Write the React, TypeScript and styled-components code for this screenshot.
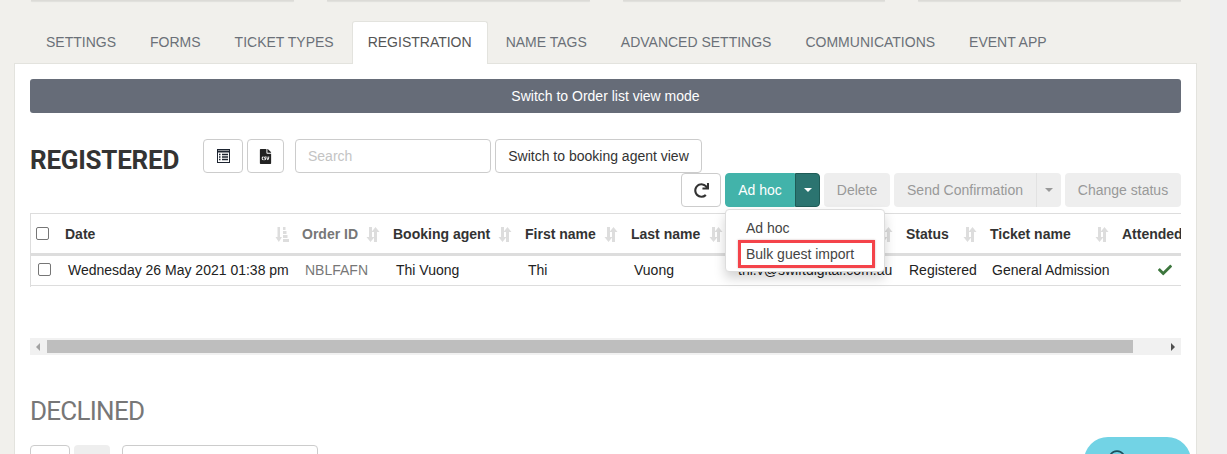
import React from "react";
import styled, { createGlobalStyle } from "styled-components";
import { FaFileCsv, FaRedo, FaCheck, FaRegQuestionCircle } from "react-icons/fa";

const Global = createGlobalStyle`
  html, body { margin: 0; padding: 0; height: 454px; overflow: hidden; background: #f1f0ec; }
  body { font-family: "Liberation Sans", Arial, sans-serif; font-size: 14px; color: #333; }
  * { box-sizing: border-box; }
`;

const Page = styled.div`
  display: flex;
  width: 1227px;
  height: 454px;
  overflow: hidden;
`;
const Main = styled.main`
  width: 1210px;
  padding: 0 13px 0 14px;
`;
const Gutter = styled.div`
  width: 17px;
  background: #efefef;
`;
const Stats = styled.div`
  display: flex;
  gap: 33px;
  padding: 0 16px 0 17px;
  height: 1px;
  margin-bottom: 20px;
`;
const Stat = styled.div`
  flex: 1;
  background: #dcdbd7;
  box-shadow: 0 1px 1px rgba(0, 0, 0, 0.08);
`;
const Tabs = styled.nav`
  display: flex;
  gap: 2px;
  padding-left: 16px;
  height: 43px;
  margin-bottom: -1px;
  position: relative;
  z-index: 1;
`;
const Tab = styled.a<{ $active?: boolean }>`
  display: flex;
  align-items: center;
  padding: 0 15px 2px;
  height: 43px;
  color: ${(p) => (p.$active ? "#555" : "#6b7078")};
  background: ${(p) => (p.$active ? "#fff" : "transparent")};
  border: 1px solid ${(p) => (p.$active ? "#e3e3de" : "transparent")};
  border-bottom: none;
  border-radius: 3px 3px 0 0;
  font-size: 14px;
  text-transform: uppercase;
  white-space: nowrap;
`;
const Card = styled.section`
  position: relative;
  height: 391px;
  background: #fff;
  border: 1px solid #e3e3de;
  border-bottom: none;
  padding: 15px 15px 0;
  overflow: hidden;
`;
const Banner = styled.div`
  height: 34px;
  display: flex;
  align-items: center;
  justify-content: center;
  background: #666c78;
  color: #fff;
  border-radius: 3px;
  font-size: 14px;
`;
const TitleRow = styled.div`
  display: flex;
  align-items: flex-start;
  margin-top: 26px;
  height: 34px;
`;
const Title = styled.h2<{ $muted?: boolean }>`
  margin: 0;
  font-family: Roboto, sans-serif;
  font-size: 26px;
  line-height: 42px;
  letter-spacing: ${(p) => (p.$muted ? "-0.75px" : "-0.25px")};
  font-weight: ${(p) => (p.$muted ? 400 : 700)};
  color: ${(p) => (p.$muted ? "#777" : "#333")};
  width: 173px;
`;
const Button = styled.button<{ $w?: number; $ml?: number }>`
  display: inline-flex;
  align-items: center;
  justify-content: center;
  height: 34px;
  width: ${(p) => (p.$w ? `${p.$w}px` : "auto")};
  margin-left: ${(p) => p.$ml ?? 0}px;
  padding: 0;
  background: #fff;
  border: 1px solid #ccc;
  border-radius: 4px;
  color: #333;
  font: 14px "Liberation Sans", Arial, sans-serif;
  white-space: nowrap;
`;
const Search = styled.input<{ $ml?: number }>`
  width: 196px;
  height: 34px;
  margin-left: ${(p) => p.$ml ?? 11}px;
  padding: 0 12px;
  border: 1px solid #ccc;
  border-radius: 4px;
  font: 14px "Liberation Sans", Arial, sans-serif;
  &::placeholder { color: #c4c4c4; }
`;
const ActionRow = styled.div`
  position: relative;
  display: flex;
  justify-content: flex-end;
  gap: 4px;
  height: 34px;
`;
const Split = styled.div`
  display: flex;
`;
const Primary = styled.button`
  width: 70px;
  height: 34px;
  padding: 0;
  border: 1px solid #42b3aa;
  border-radius: 4px 0 0 4px;
  background: #42b3aa;
  color: #fff;
  font: 14px "Liberation Sans", Arial, sans-serif;
`;
const PrimaryCaret = styled.button`
  display: flex;
  align-items: center;
  justify-content: center;
  width: 25px;
  height: 34px;
  padding: 0;
  border: 1px solid #1f5c57;
  border-radius: 0 4px 4px 0;
  background: #2b7470;
`;
const Caret = styled.span<{ $color: string }>`
  width: 0;
  height: 0;
  border-left: 4px solid transparent;
  border-right: 4px solid transparent;
  border-top: 4px solid ${(p) => p.$color};
`;
const Disabled = styled.button<{ $w: number; $join?: "left" | "right" }>`
  display: flex;
  align-items: center;
  justify-content: center;
  width: ${(p) => p.$w}px;
  height: 34px;
  padding: 0;
  border: none;
  border-left: ${(p) => (p.$join === "right" ? "1px solid #e2e2e2" : "none")};
  border-radius: ${(p) =>
    p.$join === "left" ? "4px 0 0 4px" : p.$join === "right" ? "0 4px 4px 0" : "4px"};
  background: #eee;
  color: #999;
  font: 14px "Liberation Sans", Arial, sans-serif;
`;
const Menu = styled.div`
  position: absolute;
  z-index: 5;
  left: 695px;
  top: 36px;
  width: 160px;
  height: 63px;
  padding: 5px 0;
  background: #fff;
  border: 1px solid #ddd;
  border-radius: 4px;
  box-shadow: 0 6px 12px rgba(0, 0, 0, 0.175);
`;
const MenuItem = styled.div`
  padding-left: 20px;
  height: 26px;
  line-height: 26px;
  font-size: 14px;
  color: #444;
`;
const Highlight = styled.div`
  position: absolute;
  left: 12px;
  top: 30px;
  width: 137px;
  height: 28px;
  border: 3px solid #f4434a;
  box-shadow: 0 0 2px rgba(120, 60, 60, 0.35);
  pointer-events: none;
`;
const TableWrap = styled.div`
  margin-top: 6px;
  height: 74px;
  overflow: hidden;
  border-left: 1px solid #ddd;
`;
const Table = styled.table`
  table-layout: fixed;
  width: 1200px;
  border-collapse: collapse;
  font-size: 14px;
`;
const HeadRow = styled.tr`
  height: 41px;
  border-top: 1px solid #ddd;
  border-bottom: 3px solid #ddd;
`;
const Th = styled.th<{ $muted?: boolean }>`
  position: relative;
  padding: 1px 0 0 8px;
  text-align: left;
  font-weight: 700;
  color: ${(p) => (p.$muted ? "#777" : "#333")};
  white-space: nowrap;
  overflow: hidden;
`;
const BodyRow = styled.tr`
  height: 31px;
  border-bottom: 1px solid #ddd;
`;
const Td = styled.td<{ $muted?: boolean; $pad?: number }>`
  padding: 0 0 2px ${(p) => p.$pad ?? 11}px;
  color: ${(p) => (p.$muted ? "#777" : "#222")};
  white-space: nowrap;
  overflow: hidden;
`;
const CheckBox = styled.span<{ $row?: boolean }>`
  display: block;
  width: 13px;
  height: 13px;
  margin-left: ${(p) => (p.$row ? 7 : 4)}px;
  border: 1px solid #767676;
  border-radius: 2px;
  background: #fff;
`;
const SortMark = styled.svg`
  position: absolute;
  right: 5px;
  top: 50%;
  margin-top: -7px;
  width: 14px;
  height: 15px;
  fill: #ddd;
`;
const Good = styled(FaCheck)`
  color: #3c763d;
  font-size: 14px;
  margin-left: 33px;
  vertical-align: -2px;
`;
const Scrollbar = styled.div`
  display: flex;
  align-items: center;
  justify-content: space-between;
  position: relative;
  height: 17px;
  margin-top: 51px;
  background: #f1f1f1;
  padding: 0 6px;
`;
const Thumb = styled.div`
  position: absolute;
  left: 17px;
  top: 2px;
  width: 1086px;
  height: 13px;
  background: #bebebe;
`;
const Arrow = styled.span<{ $dir: "left" | "right" }>`
  width: 0;
  height: 0;
  border-top: 4px solid transparent;
  border-bottom: 4px solid transparent;
  ${(p) =>
    p.$dir === "left"
      ? "border-right: 4px solid #a3a3a3;"
      : "border-left: 4px solid #505050;"}
`;
const SecondTitle = styled.div`
  margin-top: 35px;
`;
const SecondRow = styled.div`
  display: flex;
  margin-top: 13px;
`;
const GreyButton = styled.div`
  width: 36px;
  height: 34px;
  margin-left: 4px;
  background: #eee;
  border-radius: 4px;
`;
const Help = styled.div`
  position: absolute;
  z-index: 3;
  left: 1069px;
  top: 373px;
  width: 107px;
  height: 60px;
  padding: 13px 0 0 24px;
  background: #72d3e5;
  border-radius: 24px;
  color: #1c4f5c;
  font-size: 18px;
`;

const Sort = () => (
  <SortMark viewBox="0 0 14 15">
    <path d="M3 0h3v10h2.500l-4 5-4-5H3zM11 15H8V5H5.500l4-5 4 5H11z" />
  </SortMark>
);
const SortActive = () => (
  <SortMark viewBox="0 0 14 15">
    <path d="M2.500 0h2.500v10h2l-3.200 5L.5 10h2zM8 0h2.500v3H8zM8 4h3.500v3H8zM8 8h4.500v3H8zM8 12h6v3H8z" />
  </SortMark>
);
const ListIcon = () => (
  <svg width="13" height="14" viewBox="0 0 13 14" fill="none" stroke="#1d2430">
    <rect x="0.500" y="0.500" width="12" height="13" strokeWidth="1" />
    <path d="M0 2.500h13" strokeWidth="2" />
    <path d="M2 5.500h1.500M5 5.500h6M2 8h1.500M5 8h6M2 10.500h1.500M5 10.500h6" strokeWidth="1.300" />
  </svg>
);

const columns = [26, 237, 91, 132, 106, 105, 170, 84, 132, 117];
const tabs = ["Settings", "Forms", "Ticket types", "Registration", "Name tags", "Advanced settings", "Communications", "Event app"];

export default function App() {
  return (
    <Page>
      <Global />
      <Main>
        <Stats><Stat /><Stat /><Stat /><Stat /></Stats>
        <Tabs>
          {tabs.map((t) => (
            <Tab key={t} $active={t === "Registration"}>{t}</Tab>
          ))}
        </Tabs>
        <Card>
          <Banner>Switch to Order list view mode</Banner>
          <TitleRow>
            <Title>REGISTERED</Title>
            <Button $w={40}><ListIcon /></Button>
            <Button $w={37} $ml={4}><FaFileCsv size={15} color="#222" /></Button>
            <Search placeholder="Search" />
            <Button $w={207} $ml={4}>Switch to booking agent view</Button>
          </TitleRow>
          <ActionRow>
            <Button $w={40}><FaRedo size={15} color="#333" /></Button>
            <Split>
              <Primary>Ad hoc</Primary>
              <PrimaryCaret><Caret $color="#fff" /></PrimaryCaret>
            </Split>
            <Disabled $w={66}>Delete</Disabled>
            <Split>
              <Disabled $w={142} $join="left">Send Confirmation</Disabled>
              <Disabled $w={25} $join="right"><Caret $color="#999" /></Disabled>
            </Split>
            <Disabled $w={116}>Change status</Disabled>
            <Menu>
              <MenuItem>Ad hoc</MenuItem>
              <MenuItem>Bulk guest import</MenuItem>
              <Highlight />
            </Menu>
          </ActionRow>
          <TableWrap>
            <Table>
              <colgroup>
                {columns.map((w, i) => <col key={i} width={w} />)}
              </colgroup>
              <thead>
                <HeadRow>
                  <th><CheckBox /></th>
                  <Th>Date<SortActive /></Th>
                  <Th $muted>Order ID<Sort /></Th>
                  <Th>Booking agent<Sort /></Th>
                  <Th>First name<Sort /></Th>
                  <Th>Last name<Sort /></Th>
                  <Th>Email<Sort /></Th>
                  <Th>Status<Sort /></Th>
                  <Th>Ticket name<Sort /></Th>
                  <Th>Attended</Th>
                </HeadRow>
              </thead>
              <tbody>
                <BodyRow>
                  <Td $pad={0}><CheckBox $row /></Td>
                  <Td>Wednesday 26 May 2021 01:38 pm</Td>
                  <Td $muted>NBLFAFN</Td>
                  <Td>Thi Vuong</Td>
                  <Td>Thi</Td>
                  <Td>Vuong</Td>
                  <Td $pad={10}>thi.v@swiftdigital.com.au</Td>
                  <Td>Registered</Td>
                  <Td $pad={10}>General Admission</Td>
                  <Td><Good /></Td>
                </BodyRow>
              </tbody>
            </Table>
          </TableWrap>
          <Scrollbar>
            <Arrow $dir="left" />
            <Thumb />
            <Arrow $dir="right" />
          </Scrollbar>
          <SecondTitle><Title $muted>DECLINED</Title></SecondTitle>
          <SecondRow>
            <Button $w={40} />
            <GreyButton />
            <Search $ml={12} />
          </SecondRow>
          <Help><FaRegQuestionCircle /></Help>
        </Card>
      </Main>
      <Gutter />
    </Page>
  );
}
